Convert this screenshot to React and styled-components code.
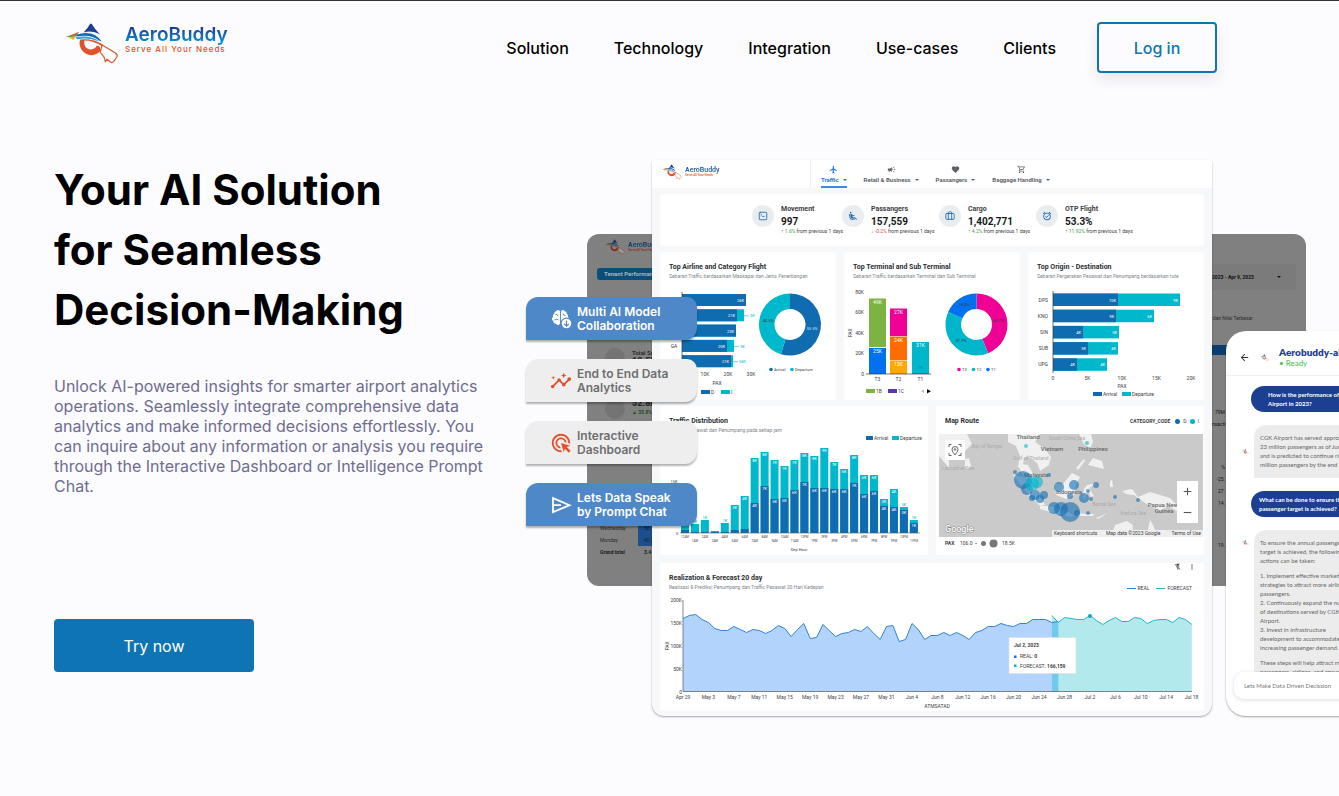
import React from "react";
import styled, { createGlobalStyle, css } from "styled-components";
import {
  MdInsights,
  MdAdsClick,
  MdFlight,
  MdFavorite,
  MdOutlineShoppingCart,
  MdAirlineSeatReclineExtra,
  MdAlarmOn,
  MdAdd,
  MdRemove,
  MdFlashOff,
  MdMoreVert,
  MdArrowBack,
  MdCampaign,
} from "react-icons/md";
import { FaBrain } from "react-icons/fa";
import { LuSquareTerminal, LuBriefcase } from "react-icons/lu";

const BLUE = "#0f6cb0";
const CYAN = "#00b8cc";

const GlobalStyle = createGlobalStyle`
  * { box-sizing: border-box; }
  body { margin: 0; background: #fcfcff; font-family: Inter, "Liberation Sans", sans-serif; color: #000; }
  h1, h2, h3, p, ul, dl, dd { margin: 0; padding: 0; }
  a { color: inherit; text-decoration: none; }
  button, input { font: inherit; }
`;

const Page = styled.div`
  min-height: 100vh;
  border-top: 1px solid #35323c;
  overflow-x: clip;
`;

/* ---------- header ---------- */

const Header = styled.header`
  display: flex;
  align-items: center;
  padding: 21px 122px 0 65px;
`;

const HomeLink = styled.div`
  align-self: flex-start;
`;

const Brand = styled.a`
  display: flex;
  align-items: ${(p) => (p.$small ? "center" : "flex-start")};
  gap: ${(p) => (p.$small ? 3 : 6)}px;
  svg { width: ${(p) => (p.$small ? 20 : 54)}px; height: auto; flex: none; }
`;

const BrandText = styled.span`
  padding-top: ${(p) => (p.$small ? 0 : 3)}px;
`;

const BrandName = styled.span`
  display: block;
  font-weight: 600;
  font-size: ${(p) => (p.$small ? 7 : 19)}px;
  line-height: ${(p) => (p.$small ? 8 : 20)}px;
  background: linear-gradient(#1c3f94 15%, #0f8fd0 85%);
  background-clip: text;
  color: transparent;
`;

const BrandTag = styled.span`
  display: block;
  font-weight: 500;
  font-size: ${(p) => (p.$small ? 3 : 8)}px;
  line-height: ${(p) => (p.$small ? 3 : 9)}px;
  letter-spacing: ${(p) => (p.$small ? 0 : 1)}px;
  color: #e0522c;
`;

const Nav = styled.nav`
  display: flex;
  align-items: center;
  gap: 45px;
  margin-left: auto;
  font-size: 16px;
  font-weight: 500;
  line-height: 24px;
`;

const LoginButton = styled.button`
  width: 120px;
  height: 51px;
  margin-left: 41px;
  border: 2px solid #0f74b3;
  border-radius: 4px;
  background: #fcfcff;
  color: #0f74b3;
  font-size: 16px;
  font-weight: 500;
  box-shadow: 0 6px 14px rgba(40, 50, 90, 0.1);
  cursor: pointer;
`;

/* ---------- hero ---------- */

const Hero = styled.main`
  display: grid;
  grid-template-columns: 432px minmax(0, 1fr);
  column-gap: 40px;
  padding: 87px 0 80px 54px;
`;

const Title = styled.h1`
  font-size: 42px;
  line-height: 60px;
  font-weight: 700;
  white-space: nowrap;
`;

const Lead = styled.p`
  margin-top: 36px;
  font-size: 16px;
  line-height: 20px;
  color: #6f6c8f;
`;

const TryButton = styled.button`
  width: 200px;
  height: 53px;
  margin-top: 123px;
  border: 0;
  border-radius: 4px;
  background: #0f74b3;
  color: #fff;
  font-size: 16px;
  cursor: pointer;
`;

const Stage = styled.section`
  position: relative;
  padding: 0 127px 0 126px;
`;

/* ---------- feature pills over the dashboard ---------- */

const Pills = styled.ul`
  position: absolute;
  z-index: 3;
  left: 0;
  top: 137px;
  display: flex;
  flex-direction: column;
  gap: 19px;
  list-style: none;
`;

const Pill = styled.li`
  display: flex;
  align-items: center;
  width: 171px;
  height: 43px;
  padding-left: 24px;
  gap: 5px;
  border-radius: 12px 10px 12px 0;
  background: ${(p) => (p.$blue ? "#4e88c9" : "#eeeeee")};
  color: ${(p) => (p.$blue ? "#fff" : "#6e6e6e")};
  font-size: 12px;
  line-height: 14px;
  font-weight: 600;
  white-space: pre-line;
  box-shadow: 0 2px 2px rgba(0, 0, 0, 0.3);
  svg { width: 22px; height: 22px; flex: none; color: ${(p) => (p.$blue ? "#fff" : "#e0522c")}; }
`;

/* ---------- dimmed tenant report ---------- */

const Backdrop = styled.div`
  position: absolute;
  left: 61px;
  right: 33px;
  top: 74px;
  height: 352px;
  display: flex;
  justify-content: space-between;
  overflow: hidden;
  border-radius: 12px;
  background: #808080;
  color: #2c2c2c;
  font-family: Roboto, sans-serif;
  font-size: 5px;
`;

const BackLeft = styled.div`
  width: 90px;
  padding: 5px 0 0 10px;
`;

const BackLogo = styled.div`
  padding-left: 8px;
  filter: brightness(0.6);
`;

const BackTab = styled.div`
  width: 90px;
  height: 12px;
  margin-top: 13px;
  padding-left: 7px;
  border-radius: 3px;
  background: #0a4f7a;
  color: #a9b4bb;
  font-size: 6px;
  font-weight: 700;
  line-height: 12px;
  white-space: nowrap;
`;

const BackStat = styled.div`
  display: flex;
  gap: 7px;
  height: 51px;
  margin-top: ${(p) => p.$top || 0}px;
  padding-left: 8px;
  font-size: 6px;
  font-weight: 700;
  line-height: 9px;
  white-space: nowrap;
  strong { display: block; font-size: 9px; }
  small { display: block; font-size: 5px; color: #1d4d20; }
`;

const BackDot = styled.span`
  width: 20px;
  height: 20px;
  border-radius: 50%;
  background: #747474;
`;

const BackTable = styled.table`
  margin: 72px 0 0 3px;
  border-spacing: 0;
  font-size: 5px;
  td { height: 12px; padding: 0; width: 38px; }
  td + td { padding-left: 6px; background: #1d4f8c; color: #0b2038; }
  tr:last-child td { background: none; font-weight: 700; color: #1a1a1a; }
`;

const BackRight = styled.div`
  width: 94px;
  padding-top: 30px;
  text-align: right;
`;

const BackDate = styled.div`
  display: flex;
  justify-content: space-between;
  align-items: center;
  height: 26px;
  margin-right: 10px;
  padding-right: 15px;
  background: #7b7b7b;
  color: #111;
  font-weight: 700;
  line-height: 8px;
`;

const BackNote = styled.p`
  margin: 24px 53px 0 0;
  line-height: 8px;
`;

const BackBar = styled.div`
  height: 10px;
  margin: 23px 10px 0 0;
  background: #0c3c70;
`;

const BackNumbers = styled.div`
  width: 13px;
  margin-top: ${(p) => p.$top}px;
  line-height: 12px;
  text-align: right;
  color: #111;
`;

/* ---------- dashboard ---------- */

const Dashboard = styled.article`
  position: relative;
  z-index: 1;
  padding-bottom: 5px;
  border-radius: 4px 4px 12px 12px;
  background: #f6f8fa;
  box-shadow: 0 1px 2px rgba(0, 0, 0, 0.35);
  font-family: Roboto, "Liberation Sans", sans-serif;
  color: #3c4043;
`;

const DashHeader = styled.div`
  display: flex;
  height: 28px;
  border-radius: 4px 4px 0 0;
  background: #fff;
`;

const DashBrand = styled.div`
  width: 159px;
  padding: 4px 0 0 10px;
  border-right: 1px solid #eceef0;
`;

const DashTabs = styled.nav`
  display: flex;
  gap: 17px;
  padding-left: 10px;
`;

const DashTab = styled.a`
  display: flex;
  flex-direction: column;
  align-items: center;
  height: 28px;
  padding-top: 5px;
  border-bottom: 2px solid ${(p) => (p.$active ? "#3a8be0" : "transparent")};
  color: ${(p) => (p.$active ? "#1a73e8" : "#5f6368")};
  font-size: 6px;
  line-height: 11px;
  font-weight: 700;
  white-space: nowrap;
  svg { width: 9px; height: 9px; flex: none; }
`;

const Caret = styled.span`
  display: inline-block;
  margin-left: 4px;
  border: 2px solid transparent;
  border-top-color: currentColor;
  border-bottom: 0;
  vertical-align: middle;
`;

const DashBody = styled.div`
  display: grid;
  gap: 6px;
  padding: 6px 8px 0;
  > :last-child { margin-top: 2px; }
`;

const Row = styled.div`
  display: grid;
  grid-template-columns: repeat(${(p) => p.$cols}, minmax(0, 1fr));
  gap: 8px;
`;

const Card = styled.section`
  position: relative;
  border-radius: 3px;
  background: #fff;
  svg { display: block; }
`;

const CardHead = styled.header`
  height: ${(p) => (p.$plain ? 28 : 30)}px;
  padding: 11px 9px 0;
  white-space: nowrap;
  h2 { font-size: 7px; line-height: 8px; font-weight: 700; color: #2b2f33; }
  p { font-size: 5px; line-height: 10px; color: #80868b; }
`;

const MapLegend = styled.div`
  position: absolute;
  top: 11px;
  right: 5px;
  display: flex;
  align-items: center;
  gap: 3px;
  font-size: 5px;
  line-height: 8px;
  b { margin-right: 2px; }
`;

const LegendDot = styled.i`
  width: 5px;
  height: 5px;
  border-radius: 50%;
  background: ${(p) => p.$color};
`;

const Chart = styled.svg`
  width: 100%;
  height: auto;
  font-family: Roboto, sans-serif;
  font-size: 5px;
  fill: #3c4043;
`;

const KpiCard = styled(Card)`
  display: flex;
  justify-content: center;
  gap: 20px;
  height: 52px;
  padding: 11px 0 0 14px;
`;

const Kpi = styled.div`
  display: flex;
  gap: 7px;
  width: ${(p) => p.$w}px;
  white-space: nowrap;
`;

const KpiIcon = styled.span`
  display: grid;
  place-items: center;
  flex: none;
  width: 22px;
  height: 22px;
  border-radius: 50%;
  background: #e9edf0;
  color: #1669ae;
  svg { width: 10px; height: 10px; }
`;

const KpiText = styled.div`
  h3 { font-size: 7px; line-height: 8px; font-weight: 700; }
  strong { display: block; padding-top: 3px; font-size: 10px; line-height: 12px; color: #15181b; }
  p { font-size: 5px; line-height: 7px; }
  em { font-style: normal; color: ${(p) => (p.$down ? "#e5484d" : "#43a047")}; }
`;

const MapButtons = styled.div`
  position: absolute;
  right: 6px;
  top: 75px;
  display: grid;
  width: 21px;
  background: #fff;
  button { display: grid; place-items: center; height: 21px; padding: 0; border: 0; background: none; color: #555; }
  svg { width: 13px; height: 13px; }
`;

const CardTools = styled.div`
  position: absolute;
  right: 8px;
  top: 0;
  display: flex;
  gap: 6px;
  button { padding: 0; border: 0; background: none; color: #444; }
  svg { width: 8px; height: 8px; }
`;

const SeriesLegend = styled.div`
  position: absolute;
  top: 22px;
  right: 12px;
  display: flex;
  gap: 7px;
  font-size: 5px;
  line-height: 6px;
`;

const SeriesKey = styled.span`
  &::before {
    content: "";
    display: inline-block;
    width: 9px;
    margin-right: 2px;
    border-top: 1px solid ${(p) => p.$color};
    vertical-align: middle;
  }
`;

/* ---------- chat ---------- */

const Chat = styled.aside`
  position: absolute;
  z-index: 2;
  left: calc(100% - 113px);
  top: 171px;
  width: 200px;
  height: 385px;
  overflow: hidden;
  border-radius: 20px;
  background: #fff;
  box-shadow: 0 1px 2px rgba(0, 0, 0, 0.35);
  font-family: Lato, sans-serif;
  font-size: 6px;
  line-height: 9px;
`;

const ChatHead = styled.header`
  display: flex;
  align-items: center;
  gap: 10px;
  height: 45px;
  padding: 8px 0 0 13px;
  border-bottom: 1px solid #f0f0f2;
  button { padding: 0; border: 0; background: none; line-height: 0; color: #333; }
  button svg { width: 11px; height: 11px; }
  svg { width: 9px; height: auto; }
  h2 { font-size: 10px; line-height: 12px; font-weight: 800; color: #253f93; white-space: nowrap; }
  p { font-size: 8px; line-height: 11px; color: #3dc24b; }
`;

const ChatBody = styled.div`
  display: flex;
  flex-direction: column;
  padding: 10px 0 0 16px;
`;

const bubble = css`
  width: 130px;
  white-space: pre-line;
`;

const Asked = styled.p`
  ${bubble}
  margin-left: 9px;
  height: 26px;
  padding: 4px 0 0 ${(p) => p.$indent}px;
  border-radius: 13px;
  background: #1c3f94;
  color: #fff;
  font-weight: 700;
`;

const Answer = styled.div`
  display: flex;
  align-items: flex-start;
  gap: 5px;
  margin: 13px 0;
  > svg { width: 7px; height: auto; margin-top: ${(p) => p.$mark}px; flex: none; }
`;

const AnswerText = styled.div`
  ${bubble}
  display: grid;
  align-content: start;
  gap: 6px;
  height: ${(p) => p.$h}px;
  padding: ${(p) => p.$pad}px 0 0 6px;
  overflow: hidden;
  border-radius: 12px 12px 0 0;
  background: #ececec;
  color: #666;
`;

const ChatInput = styled.input`
  position: absolute;
  left: 8px;
  bottom: 17px;
  width: 184px;
  height: 27px;
  padding: 0 10px;
  border: 0;
  border-radius: 10px;
  background: #fff;
  box-shadow: 0 1px 4px rgba(0, 0, 0, 0.14);
  &::placeholder { color: #777; opacity: 1; }
`;

/* ---------- drawings ---------- */

const LogoMark = () => (
  <svg viewBox="0 0 54 42" aria-hidden="true">
    <path d="M18.600 10.600Q22.500 6.500 25 2q.9-1.200 1.800 0Q30 7.500 34.800 12.200 27 8 18.600 10.600Z" fill="#1c3f94" />
    <path d="M11 12.800Q28 7 36.800 19.400L35 19Q26 11.600 11.500 14.400Z" fill="#1668b4" />
    <path d="M10.500 15.200Q25 12.400 34.600 19.400L32 18.800Q23 15.500 12 17.200Z" fill="#2aa7dc" />
    <path d="M.8 15 14.400 9.800 11 14Z" fill="#d9532c" />
    <path d="M.8 15 12 12 10 15.200Z" fill="#4f9d5b" />
    <path d="M3.500 15.600 11 14 8.600 18Z" fill="#f2b430" />
    <path d="M15 17.600Q13.500 24 17 28.200A11.400 11.400 0 0 0 35.600 28.600L34.600 24.400 31.800 23.600A6.600 6.600 0 0 1 20 24Q18.600 21 19.400 18.600Q28 18.400 37 24.200L37.800 22.600Q27 15.800 15 17.600Z" fill="#e0522c" />
    <path d="M37.200 23 50.400 31q2.600 2 1.400 4L48.600 39.600q-1.500 1.600-3.200.4L42 37.200 40.400 39.800 39.400 35.600 35.200 30Z" fill="#fff" stroke="#e0522c" strokeWidth="1.200" strokeLinejoin="round" />
  </svg>
);

const Logo = ({ small }) => (
  <Brand href="#home" $small={small} aria-label="AeroBuddy">
    <LogoMark />
    <BrandText $small={small}>
      <BrandName $small={small}>AeroBuddy</BrandName>
      <BrandTag $small={small}>Serve All Your Needs</BrandTag>
    </BrandText>
  </Brand>
);

const BrainIcon = () => (
  <svg viewBox="0 0 22 22" aria-hidden="true">
    <FaBrain x="2" y="1" style={{ width: 17, height: 17 }} />
    <path d="M5.500 6.500q2-.5 2.500 1.500M4.500 12q2.500-1.500 4 0M13 5.500q0 2 2.500 2" fill="none" stroke="#4e88c9" />
    <circle cx="16.500" cy="15.500" r="5.400" fill="#fff" stroke="#4e88c9" strokeWidth="1.200" />
    <path d="M16.500 12.600v5.400M14.200 15.900l2.300 2.300 2.300-2.300" fill="none" stroke="#4e88c9" strokeWidth="1.200" />
  </svg>
);

const SendIcon = () => (
  <svg viewBox="0 0 22 22" fill="none" stroke="currentColor" strokeWidth="1.800" aria-hidden="true">
    <path d="M3 4.200 19.500 11.200 3 18.200 V4.200Z M3.500 11.200H11" />
  </svg>
);

const polar = (cx, cy, r, deg) => {
  const a = ((deg - 90) * Math.PI) / 180;
  return `${(cx + r * Math.cos(a)).toFixed(2)} ${(cy + r * Math.sin(a)).toFixed(2)}`;
};

const Donut = ({ cx, cy, slices }) => {
  let from = 0;
  return slices.map(([to, color]) => {
    const big = to - from > 180 ? 1 : 0;
    const d = `M${polar(cx, cy, 31, from)}A31 31 0 ${big} 1 ${polar(cx, cy, 31, to)}L${polar(cx, cy, 15.5, to)}A15.5 15.5 0 ${big} 0 ${polar(cx, cy, 15.5, from)}Z`;
    from = to;
    return <path key={color} d={d} fill={color} />;
  });
};

const Label = ({ x, y, children, anchor = "middle", fill, size, bold }) => (
  <text x={x} y={y} textAnchor={anchor} fill={fill} fontSize={size} fontWeight={bold ? 700 : undefined}>
    {children}
  </text>
);

const Key = ({ x, y, w = 9, color, children }) => (
  <>
    <rect x={x} y={y - 4} width={w} height="4" fill={color} />
    <Label x={x + w + 1} y={y} anchor="start" size="5">{children}</Label>
  </>
);

const DotKey = ({ x, y, color, children }) => (
  <>
    <circle cx={x} cy={y - 1.5} r="1.8" fill={color} />
    <Label x={x + 3} y={y} anchor="start" size="4">{children}</Label>
  </>
);

const airlines = [
  [64, 64, "26K", ""],
  [55, 62, "21K", "3K"],
  [54, 54, "23K", ""],
  [45, 52, "20K", "3K"],
  [49, 51, "21K", "580"],
];

const AirlineChart = () => (
  <Chart viewBox="660 282 176 118" role="img" aria-label="Top airline bars and category donut">
    {airlines.map(([a, t, n, m], i) => {
      const y = 294 + i * 15.3;
      return (
        <g key={i}>
          <rect x="682" y={y} width={t} height="12" fill={CYAN} />
          <rect x="682" y={y} width={a} height="12" fill={BLUE} />
          <Label x={680 + a} y={y + 8} anchor="end" fill="#fff" size="4">{n}</Label>
          {m && <path d={`M${682 + t} ${y + 6.5}h5`} stroke={CYAN} strokeWidth=".6" />}
          {m && <Label x={688 + t} y={y + 8} anchor="start" fill={CYAN} size="4">{m}</Label>}
        </g>
      );
    })}
    <path d="M682 292v77" stroke="#333" strokeWidth=".7" />
    <Label x="674" y="348">GA</Label>
    <Label x="705" y="376">10K</Label>
    <Label x="728" y="376">20K</Label>
    <Label x="751" y="376">30K</Label>
    <Label x="717" y="385">PAX</Label>
    <Key x={701} y={394} color={BLUE}>D</Key>
    <Key x={721} y={394} color={CYAN}>I</Key>
    <Donut cx={790} cy={324.5} slices={[[197, BLUE], [360, CYAN]]} />
    <Label x="812" y="330" fill="#cfe3f5" size="4">55.5%</Label>
    <Label x="768" y="322" size="4">44.5%</Label>
    <DotKey x={771} y={371} color={BLUE}>Arrival</DotKey>
    <DotKey x={792} y={371} color={CYAN}>Departure</DotKey>
  </Chart>
);

const terminals = [
  [869, 17, [[298.5, 48.5, "#7cb342", "49K"], [348, 26, "#0072f0", "25K"]], "T3"],
  [890, 17, [[308.5, 27.5, "#f10096", "27K"], [336.5, 23.5, "#ff6d00", "24K"], [360.5, 13.5, "#ffa800", "13K"]], "T2"],
  [912, 17, [[342, 32, "#00b6cb", "31K"]], "T1"],
];

const TerminalChart = () => (
  <Chart viewBox="844 282 176 118" role="img" aria-label="Top terminal bars and share donut">
    {["80K", "60K", "40K", "20K", "0"].map((t, i) => (
      <Label key={t} x="864" y={294 + i * 20.4} anchor="end">{t}</Label>
    ))}
    <text transform="translate(852 333) rotate(-90)" textAnchor="middle">PAX</text>
    {terminals.map(([x, w, parts, name]) => (
      <g key={name}>
        {parts.map(([y, h, c, t]) => (
          <g key={y}>
            <rect x={x} y={y} width={w} height={h} fill={c} />
            <Label x={x + w / 2} y={y + 5} fill="#fff" size="5">{t}</Label>
          </g>
        ))}
        <Label x={x + w / 2} y="381">{name}</Label>
      </g>
    ))}
    <Label x="921" y="369" fill="#12808d" size="4">7K</Label>
    <path d="M866 374h65" stroke="#333" strokeWidth=".7" />
    <Key x={866} y={393} color="#7cb342">1B</Key>
    <Key x={888} y={393} color="#5e35b1">1C</Key>
    <path d="M924 389.500l-3 1.700 3 1.700Z" fill="#bbb" />
    <path d="M927 389l4 2.200-4 2.200Z" fill="#111" />
    <Donut cx={976.5} cy={324.5} slices={[[158, "#f10096"], [294, "#00b6cb"], [360, "#0072f0"]]} />
    <Label x="998" y="322" size="4">43.7%</Label>
    <Label x="961" y="342" size="4">37.9%</Label>
    <Label x="964" y="306" size="4">18.4%</Label>
    <DotKey x={959} y={371} color="#f10096">T3</DotKey>
    <DotKey x={973.5} y={371} color="#00b6cb">T2</DotKey>
    <DotKey x={988} y={371} color="#0072f0">T1</DotKey>
  </Chart>
);

const routes = [
  ["DPS", 65, 127, "10K", "9K"],
  ["KNO", 63, 101, "9K", "6K"],
  ["SIN", 30, 66, "4K", "5K"],
  ["SUB", 35, 65, "5K", "4K"],
  ["UPG", 24, 54, "4K", "4K"],
];

const RouteChart = () => (
  <Chart viewBox="1028 282 176 118" role="img" aria-label="Top origin and destination bars">
    {routes.map(([name, a, t, n, m], i) => {
      const y = 293.5 + i * 16.2;
      return (
        <g key={name}>
          <rect x="1053" y={y} width={t} height="12.5" fill={CYAN} />
          <rect x="1053" y={y} width={a} height="12.5" fill={BLUE} />
          <Label x={1051 + a} y={y + 8} anchor="end" fill="#fff" size="4">{n}</Label>
          <Label x={1051 + t} y={y + 8} anchor="end" fill="#fff" size="4">{m}</Label>
          <Label x="1048" y={y + 8} anchor="end">{name}</Label>
        </g>
      );
    })}
    <path d="M1053 291v82" stroke="#333" strokeWidth=".7" />
    {["0", "5K", "10K", "15K", "20K"].map((t, i) => (
      <Label key={t} x={1053 + i * 34.5} y="380">{t}</Label>
    ))}
    <Label x="1122" y="388">PAX</Label>
    <Key x={1093} y={396} color={BLUE}>Arrival</Key>
    <Key x={1122} y={396} color={CYAN}>Departure</Key>
  </Chart>
);

const hours = [
  [8, 3], [9, 1], [13, 1], [2, 1], [10, 1], [28, 3], [37, 4], [75, 30], [81, 47], [73, 34], [67, 35], [73, 43],
  [80, 51], [77, 45], [85, 45], [71, 44], [64, 44], [78, 50], [58, 39], [58, 42], [34, 27], [44, 26], [26, 23], [13, 10],
];

const TrafficChart = () => (
  <Chart viewBox="660 436 268 119" role="img" aria-label="Traffic distribution by hour">
    {hours.map(([t, a], i) => {
      const x = 681 + i * 9.95;
      const hour = `${i % 12 || 12}${i < 12 ? "AM" : "PM"}`;
      return (
        <g key={i}>
          <rect x={x} y={533 - t} width="8" height={t} fill={CYAN} />
          <rect x={x} y={533 - a} width="8" height={a} fill={BLUE} />
          {t > 8 && <Label x={x + 4} y={t > 26 ? 537 - t : 532 - t} fill={t > 26 ? "#fff" : CYAN} size="4">{Math.round(t / 10)}K</Label>}
          {a > 9 && <Label x={x + 4} y={537 - a} fill="#fff" size="4">{Math.round(a / 7)}K</Label>}
          <Label x={x + 4} y={i % 2 ? 542 : 538} size="3">{hour}</Label>
        </g>
      );
    })}
    <path d="M680 533h240" stroke="#555" strokeWidth=".6" />
    <Label x="674" y="483" size="4">15K</Label>
    <Label x="677" y="535" size="4">0</Label>
    <Label x="799" y="551" size="4">Dep Hour</Label>
    <Key x={866} y={440} w={7} color={BLUE}>Arrival</Key>
    <Key x={892} y={440} w={7} color={CYAN}>Departure</Key>
  </Chart>
);

const lands = [
  "M939 434h28l5 10-8 8-6-6-9 12 0 10-10-12Z M965 459l4-1 2 8-3 4-3-4Z",
  "M1008 434h32l-5 8 10 7 6 8-2 8-9 6-3-8-9-7-4 2-1 7 6 14-3 1-8-14 2-10-4-10-8-4Z",
  "M1079 434h12l2 8-3 6-6-4Z M1093 458l9 3 2 8-8-2-8-2Z M1076 468l8-9 1 2-7 9Z",
  "M1013 475l10 2 14 14 8 14-5 1-10-10-10-12Z",
  "M1022 464l6 1 8 14-1 6-6-7Z",
  "M1040 506l8 0 14 3 12 6-2 2-18-4-14-4Z",
  "M1055 484l8 0 9-11 8 4-4 8-2 10-8 4-10-4Z",
  "M1084 489l3-4 10-2-8 5 5 8-3 1-3-6-3 8-2 0Z",
  "M1076 513l10 1 8 0-1 2-16 0Z M1096 518l12-5-10 6Z M1110 482l2-3 1 8-3 0Z",
  "M1122 491l10-2 6 8 12-5 20 6 14 14-2 2-14-8-8 5-12-6-14-10-8-1Z",
  "M1111 537l4-12 12-4 6 4-1 8 8 4Z M1150 520l3 5 5 12h-7l-3-8Z",
];

const bubbles = [
  [1023, 480, 9], [1027, 489, 6], [1032, 484, 7, 1], [1037, 482, 6, 1], [1015, 472, 2], [1049, 475, 2], [1035, 495, 5],
  [1044, 495, 4], [1040, 499, 4], [1032, 498, 3], [1054, 508, 6], [1061, 509, 7], [1070, 512, 10], [1077, 513, 3],
  [1088, 513, 2], [1059, 487, 5], [1074, 485, 5], [1070, 496, 3], [1084, 498, 5], [1091, 499, 2], [1088, 491, 2],
  [1096, 485, 3], [1115, 497, 2], [1138, 500, 2], [1026, 446, 2, 1], [1087, 443, 2, 1],
];

const RouteMap = () => (
  <Chart viewBox="936 434 268 121" role="img" aria-label="Route map of Southeast Asia">
    <rect x="939" y="434" width="264" height="103" fill="#cacaca" />
    {lands.map((d) => <path key={d} d={d} fill="#f0f0f0" />)}
    <g fill="#aaa">
      <Label x="987" y="448">Bay of Bengal</Label>
      <Label x="1067" y="440">South China Sea</Label>
      <Label x="958" y="470">Laccadive Sea</Label>
      <Label x="1104" y="506">Banda Sea</Label>
      <Label x="1133" y="515">Arafura Sea</Label>
      <Label x="1031" y="460">Gulf of Thailand</Label>
    </g>
    <g fill="#666" fontWeight="500" fontSize="6">
      <Label x="1028" y="439">Thailand</Label>
      <Label x="1052" y="451">Vietnam</Label>
      <Label x="1093" y="451">Philippines</Label>
      <Label x="1036" y="477">Malaysia</Label>
      <Label x="1069" y="494">Indonesia</Label>
      <Label x="1163" y="507">Papua New</Label>
      <Label x="1164" y="513">Guinea</Label>
    </g>
    {bubbles.map(([x, y, r, c]) => (
      <circle key={`${x}-${y}`} cx={x} cy={y} r={r} fill={c ? CYAN : BLUE} fillOpacity=".6" />
    ))}
    <rect x="945" y="440" width="20" height="20" fill="#fff" />
    <g fill="none" stroke="#555" strokeWidth=".9">
      <path d="M949 447v-2.500h2.500M958.500 444.500h2.500v2.500M961 453v2.500h-2.500M951.500 455.500h-2.500v-2.500" />
      <path d="M955 455q-3-3.500-3-5.500a3 3 0 0 1 6 0q0 2-3 5.500Z" />
      <circle cx="955" cy="449.500" r=".8" />
    </g>
    <text x="945" y="532" fontSize="9" fontWeight="500" fill="#fff" stroke="#888" strokeWidth="1" paintOrder="stroke">Google</text>
    <rect x="1052" y="530" width="151" height="7" fill="#eee" />
    <Label x="1054" y="535" anchor="start">Keyboard shortcuts</Label>
    <Label x="1106" y="535" anchor="start">Map data ©2023 Google</Label>
    <Label x="1201" y="535" anchor="end">Terms of Use</Label>
    <Label x="945" y="545" anchor="start" bold>PAX</Label>
    <Label x="960" y="545" anchor="start">106.0</Label>
    <circle cx="976" cy="543.500" r=".8" fill="#777" />
    <circle cx="983.500" cy="543.500" r="2.500" fill="#777" />
    <circle cx="993.500" cy="543.500" r="4" fill="#777" />
    <Label x="1002" y="545" anchor="start">18.5K</Label>
  </Chart>
);

/* Daily heights above the zero line, one value per day from Apr 29. */
const real = [
  73, 76, 77, 72, 69, 63, 61, 61, 65, 62, 59, 62, 61, 58, 61, 66, 63, 55, 62, 68, 53, 54, 67, 61, 55, 58, 59, 62, 60, 65,
  58, 52, 65, 66, 50, 52, 68, 62, 52, 56, 56, 59, 56, 59, 56, 52, 59, 61, 65, 65, 68, 66, 65, 68, 68, 72, 72, 72, 69, 70,
];
const forecast = [76, 69, 74, 73, 72, 72, 76, 71, 67, 71, 74, 70, 70, 74, 73, 68, 71, 72, 72, 69, 74, 72, 67];
const STEP = 6.36;

const line = (values, start) =>
  values.map((v, i) => `${(683 + (start + i) * STEP).toFixed(1)} ${691.5 - v}`).join("L");

const dates = [
  "Apr 29", "May 3", "May 7", "May 11", "May 15", "May 19", "May 23", "May 27", "May 31", "Jun 4", "Jun 8",
  "Jun 12", "Jun 16", "Jun 20", "Jun 24", "Jun 28", "Jul 2", "Jul 6", "Jul 10", "Jul 14", "Jul 18",
];

const ForecastChart = () => (
  <Chart viewBox="660 593 544 118" role="img" aria-label="Real and forecast passengers per day">
    <path d={`M683 691.5L${line(real, 0)}V691.500Z`} fill="#b2d4fc" />
    <path d={`M1052 691.500L${line(forecast, 58)}V691.500Z`} fill="#9fe3e8" fillOpacity=".8" />
    <rect x="1052" y="622" width="6.400" height="69.500" fill="#64c4ea" fillOpacity=".8" />
    <path d={`M${line(real, 0)}`} fill="none" stroke="#3380d8" strokeWidth="1" />
    <path d={`M${line(forecast, 58)}`} fill="none" stroke="#22b7c4" strokeWidth="1" />
    <circle cx="1090" cy="616" r="2" fill="#17a2b5" />
    <path d="M683 600v91.500H1192" fill="none" stroke="#555" strokeWidth=".7" />
    {["200K", "150K", "100K", "50K", "0"].map((t, i) => (
      <Label key={t} x="682" y={602 + i * 22.9} anchor="end">{t}</Label>
    ))}
    <text transform="translate(669 646) rotate(-90)" textAnchor="middle">PAX</text>
    {dates.map((t, i) => <Label key={t} x={683 + i * 25.43} y="699">{t}</Label>)}
    <Label x="937" y="708">ATMSATAD</Label>
    <rect x="1009" y="637.500" width="67" height="36" fill="#fff" stroke="#ddd" strokeWidth=".6" />
    <Label x="1014" y="647" anchor="start" bold>Jul 2, 2023</Label>
    <rect x="1014" y="655.500" width="2.500" height="2.500" fill="#1a73e8" />
    <Label x="1020" y="658" anchor="start">REAL: <tspan fontWeight="700">0</tspan></Label>
    <rect x="1014" y="664.500" width="2.500" height="2.500" fill={CYAN} />
    <Label x="1020" y="668" anchor="start">FORECAST: <tspan fontWeight="700">166,159</tspan></Label>
  </Chart>
);

/* ---------- composed parts ---------- */

const pills = [
  ["Multi AI Model\nCollaboration", BrainIcon, true],
  ["End to End Data\nAnalytics", MdInsights, false],
  ["Interactive\nDashboard", MdAdsClick, false],
  ["Lets Data Speak\nby Prompt Chat", SendIcon, true],
];

const kpis = [
  ["Movement", "997", "1.6%", LuSquareTerminal, 70],
  ["Passangers", "157,559", "-0.2%", MdAirlineSeatReclineExtra, 77, true],
  ["Cargo", "1,402,771", "4.2%", LuBriefcase, 77],
  ["OTP Flight", "53.3%", "11.92%", MdAlarmOn, 90],
];

const ChartCard = ({ title, note, children, extra }) => (
  <Card>
    <CardHead $plain={!note}>
      <h2>{title}</h2>
      {note && <p>{note}</p>}
    </CardHead>
    {children}
    {extra}
  </Card>
);

const TenantReport = () => (
  <Backdrop>
    <BackLeft>
      <BackLogo><Logo small /></BackLogo>
      <BackTab>Tenant Performance</BackTab>
      <BackStat $top={68}>
        <BackDot />
        <span>Total Sales<strong>12.5M</strong></span>
      </BackStat>
      <BackStat>
        <BackDot />
        <span><strong>52.8K</strong><small>▲ 33.8% from</small></span>
      </BackStat>
      <BackTable>
        <tbody>
          <tr><td>Wednesday</td><td>58.1</td></tr>
          <tr><td>Monday</td><td>42.5</td></tr>
          <tr><td>Grand total</td><td>3.4</td></tr>
        </tbody>
      </BackTable>
    </BackLeft>
    <BackRight>
      <BackDate><span>2023 - Apr 9, 2023</span><Caret /></BackDate>
      <BackNote>dan Nilai Terbesar</BackNote>
      <BackBar />
      <BackNumbers $top={51}>79M<br />nsacti</BackNumbers>
      <BackNumbers $top={31}>%<br />-25.<br />27.<br />14.</BackNumbers>
      <BackNumbers $top={30}>19.</BackNumbers>
    </BackRight>
  </Backdrop>
);

const TrafficDashboard = () => (
  <Dashboard>
    <DashHeader>
      <DashBrand><Logo small /></DashBrand>
      <DashTabs aria-label="Dashboard sections">
        <DashTab href="#traffic" $active><MdFlight /><span>Traffic<Caret /></span></DashTab>
        <DashTab href="#retail"><MdCampaign /><span>Retail &amp; Business<Caret /></span></DashTab>
        <DashTab href="#passangers"><MdFavorite /><span>Passangers<Caret /></span></DashTab>
        <DashTab href="#baggage"><MdOutlineShoppingCart /><span>Baggage Handling<Caret /></span></DashTab>
      </DashTabs>
    </DashHeader>
    <DashBody>
      <KpiCard>
        {kpis.map(([name, value, change, Icon, w, down]) => (
          <Kpi key={name} $w={w}>
            <KpiIcon><Icon /></KpiIcon>
            <KpiText $down={down}>
              <h3>{name}</h3>
              <strong>{value}</strong>
              <p><em>{down ? "↓" : "↑"} {change}</em> from previous 1 days</p>
            </KpiText>
          </Kpi>
        ))}
      </KpiCard>
      <Row $cols={3}>
        <ChartCard title="Top Airline and Category Flight" note="Sebaran Traffic berdasarkan Maskapai dan Jenis Penerbangan">
          <AirlineChart />
        </ChartCard>
        <ChartCard title="Top Terminal and Sub Terminal" note="Sebaran Traffic berdasarkan Terminal dan Sub Terminal">
          <TerminalChart />
        </ChartCard>
        <ChartCard title="Top Origin - Destination" note="Sebaran Pergerakan Pesawat dan Penumpang berdasarkan rute">
          <RouteChart />
        </ChartCard>
      </Row>
      <Row $cols={2}>
        <ChartCard title="Traffic Distribution" note="Sebaran Pesawat dan Penumpang pada setiap jam">
          <TrafficChart />
        </ChartCard>
        <ChartCard
          title="Map Route"
          extra={
            <>
              <MapLegend>
                <b>CATEGORY_CODE</b>
                <LegendDot $color={BLUE} />D
                <LegendDot $color={CYAN} />I
              </MapLegend>
              <MapButtons>
                <button type="button" aria-label="Zoom in"><MdAdd /></button>
                <button type="button" aria-label="Zoom out"><MdRemove /></button>
              </MapButtons>
            </>
          }
        >
          <RouteMap />
        </ChartCard>
      </Row>
      <ChartCard
        title="Realization & Forecast 20 day"
        note="Realisasi & Prediksi Penumpang dan Traffic Pesawat 20 Hari Kedepan"
        extra={
          <>
            <CardTools>
              <button type="button" aria-label="Disable live data"><MdFlashOff /></button>
              <button type="button" aria-label="More"><MdMoreVert /></button>
            </CardTools>
            <SeriesLegend>
              <SeriesKey $color="#3380d8">REAL</SeriesKey>
              <SeriesKey $color="#22b7c4">FORECAST</SeriesKey>
            </SeriesLegend>
          </>
        }
      >
        <ForecastChart />
      </ChartCard>
    </DashBody>
  </Dashboard>
);

const ChatPanel = () => (
  <Chat aria-label="Prompt chat">
    <ChatHead>
      <button type="button" aria-label="Back"><MdArrowBack /></button>
      <LogoMark />
      <div>
        <h2>Aerobuddy-ai</h2>
        <p>• Ready</p>
      </div>
    </ChatHead>
    <ChatBody>
      <Asked $indent={17}>{"How is the performance of CGK\nAirport in 2023?"}</Asked>
      <Answer $mark={24}>
        <LogoMark />
        <AnswerText $h={53} $pad={8}>
          <p>{"CGK Airport has served approximately\n23 million passengers as of June 2023\nand is predicted to continue rising to 50\nmillion passengers by the end of year."}</p>
        </AnswerText>
      </Answer>
      <Asked $indent={8}>{"What can be done to ensure the\npassenger target is achieved?"}</Asked>
      <Answer $mark={10}>
        <LogoMark />
        <AnswerText $h={160} $pad={8}>
          <p>{"To ensure the annual passenger\ntarget is achieved, the following\nactions can be taken:"}</p>
          <p>{"1. Implement effective marketing\nstrategies to attract more airlines and\npassengers.\n2. Continuously expand the number\nof destinations served by CGK\nAirport.\n3. Invest in infrastructure\ndevelopment to accommodate\nincreasing passenger demand."}</p>
          <p>{"These steps will help attract more\npassengers, airlines, and ensure"}</p>
        </AnswerText>
      </Answer>
    </ChatBody>
    <ChatInput aria-label="Message" placeholder="Lets Make Data Driven Decission" />
  </Chat>
);

export default function App() {
  return (
    <Page>
      <GlobalStyle />
      <Header>
        <HomeLink><Logo /></HomeLink>
        <Nav aria-label="Main">
          <a href="#solution">Solution</a>
          <a href="#technology">Technology</a>
          <a href="#integration">Integration</a>
          <a href="#use-cases">Use-cases</a>
          <a href="#clients">Clients</a>
        </Nav>
        <LoginButton type="button">Log in</LoginButton>
      </Header>
      <Hero>
        <div>
          <Title>Your AI Solution<br />for Seamless<br />Decision-Making</Title>
          <Lead>
            Unlock AI-powered insights for smarter airport analytics operations. Seamlessly integrate
            comprehensive data analytics and make informed decisions effortlessly. You can inquire about any
            information or analysis you require through the Interactive Dashboard or Intelligence Prompt Chat.
          </Lead>
          <TryButton type="button">Try now</TryButton>
        </div>
        <Stage aria-label="Product preview">
          <TenantReport />
          <TrafficDashboard />
          <Pills>
            {pills.map(([text, Icon, blue]) => (
              <Pill key={text} $blue={blue}><Icon /><span>{text}</span></Pill>
            ))}
          </Pills>
          <ChatPanel />
        </Stage>
      </Hero>
    </Page>
  );
}
